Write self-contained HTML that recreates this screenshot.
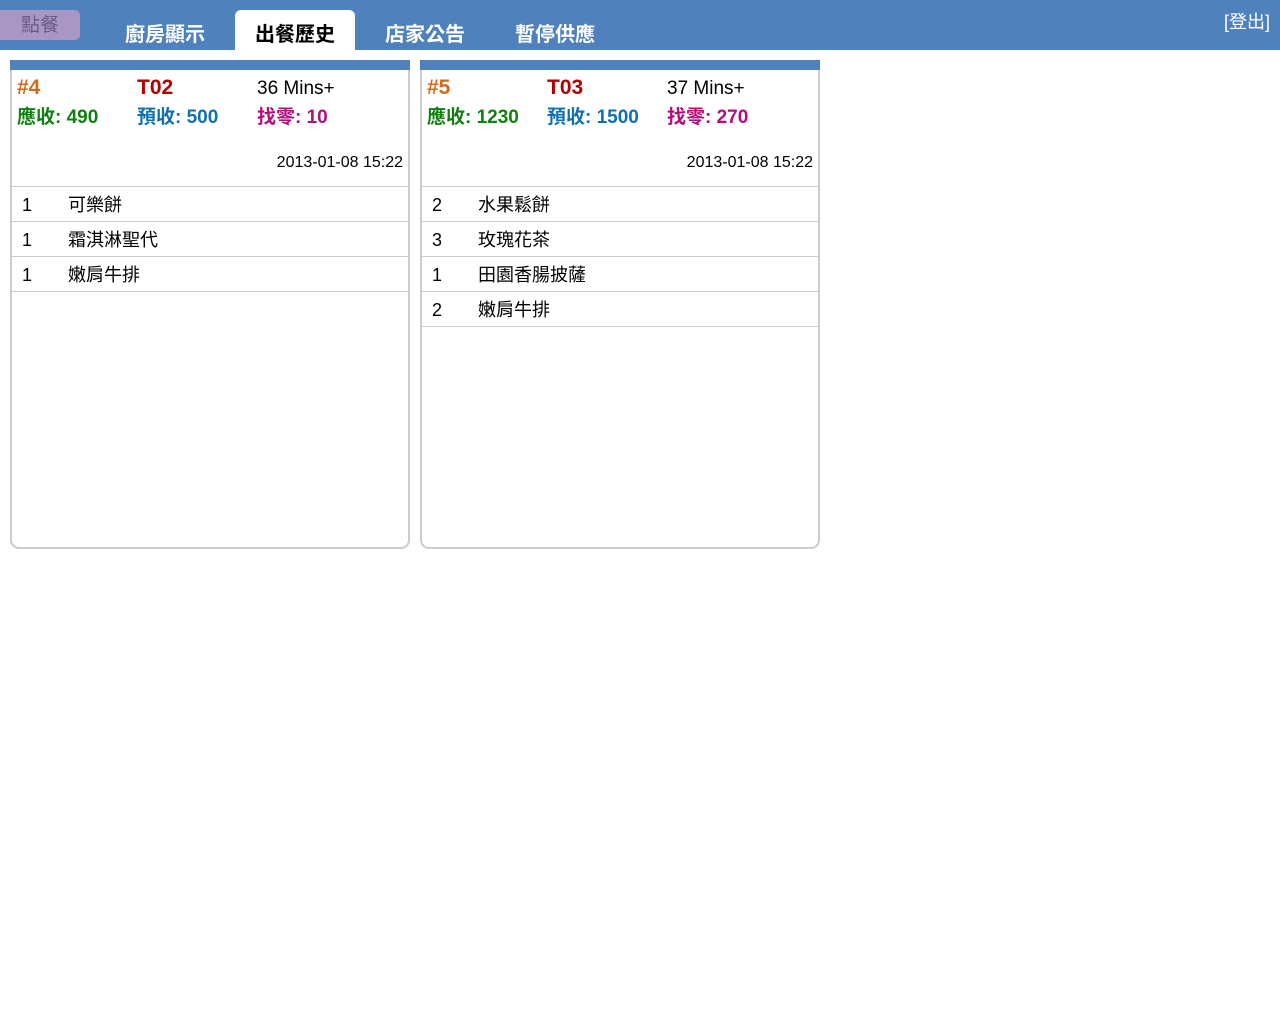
<!DOCTYPE html>
<html><head><meta charset="utf-8"><style>
*{margin:0;padding:0;box-sizing:border-box}
body{width:1280px;height:1024px;background:#fff;font-family:"Liberation Sans","Noto Sans CJK TC",sans-serif;position:relative;overflow:hidden}
.top{position:absolute;left:0;top:0;width:1280px;height:50px;background:#4f81bd}
.btn{position:absolute;left:0;top:10px;width:80px;height:30px;background:#a896c4;border-radius:0 5px 5px 0;color:#6b5a86;font-size:19px;text-align:center;line-height:32px}
.tab{position:absolute;top:10px;height:40px;width:120px;text-align:center;color:#fff;font-size:20px;font-weight:bold;line-height:50px}
.tab.act{background:#fff;color:#000;border-radius:6px 6px 0 0}
.logout{position:absolute;right:10px;top:8px;color:#fff;font-size:18px}
.card{position:absolute;top:60px;width:400px;height:489px;border:2px solid #ccc;border-top:none;border-radius:0 0 9px 9px}
.bar{height:10px;background:#4f81bd;margin:0 -2px}
.a{position:absolute;font-size:21px;font-weight:bold}
.b{position:absolute;font-size:19px;top:42px;font-weight:bold}
.dt{position:absolute;right:5px;top:94px;font-size:16px;color:#000}
.rows{position:absolute;top:126px;left:0;right:0;border-top:1px solid #ccc}
.row{height:35px;border-bottom:1px solid #ccc;font-size:18px;line-height:36px;position:relative}
.row .q{position:absolute;left:10px}
.row .n{position:absolute;left:56px}
</style></head><body>
<div class="top">
<div class="btn">點餐</div>
<div class="tab" style="left:105px">廚房顯示</div>
<div class="tab act" style="left:235px">出餐歷史</div>
<div class="tab" style="left:365px">店家公告</div>
<div class="tab" style="left:495px">暫停供應</div>
<div class="logout">[登出]</div>
</div>
<div class="card" style="left:10px">
<div class="bar"></div>
<div class="a" style="left:5px;top:16px;color:#d2691e">#4</div>
<div class="a" style="left:125px;top:16px;color:#b00000">T02</div>
<div class="a" style="left:245px;top:18px;font-size:19px;font-weight:normal;color:#000">36 Mins+</div>
<div class="b" style="left:5px;color:#108010">應收: 490</div>
<div class="b" style="left:125px;color:#1070b0">預收: 500</div>
<div class="b" style="left:245px;color:#b0107a">找零: 10</div>
<div class="dt">2013-01-08 15:22</div>
<div class="rows">
<div class="row"><span class="q">1</span><span class="n">可樂餅</span></div>
<div class="row"><span class="q">1</span><span class="n">霜淇淋聖代</span></div>
<div class="row"><span class="q">1</span><span class="n">嫩肩牛排</span></div>
</div></div>
<div class="card" style="left:420px">
<div class="bar"></div>
<div class="a" style="left:5px;top:16px;color:#d2691e">#5</div>
<div class="a" style="left:125px;top:16px;color:#b00000">T03</div>
<div class="a" style="left:245px;top:18px;font-size:19px;font-weight:normal;color:#000">37 Mins+</div>
<div class="b" style="left:5px;color:#108010">應收: 1230</div>
<div class="b" style="left:125px;color:#1070b0">預收: 1500</div>
<div class="b" style="left:245px;color:#b0107a">找零: 270</div>
<div class="dt">2013-01-08 15:22</div>
<div class="rows">
<div class="row"><span class="q">2</span><span class="n">水果鬆餅</span></div>
<div class="row"><span class="q">3</span><span class="n">玫瑰花茶</span></div>
<div class="row"><span class="q">1</span><span class="n">田園香腸披薩</span></div>
<div class="row"><span class="q">2</span><span class="n">嫩肩牛排</span></div>
</div></div>
</body></html>
